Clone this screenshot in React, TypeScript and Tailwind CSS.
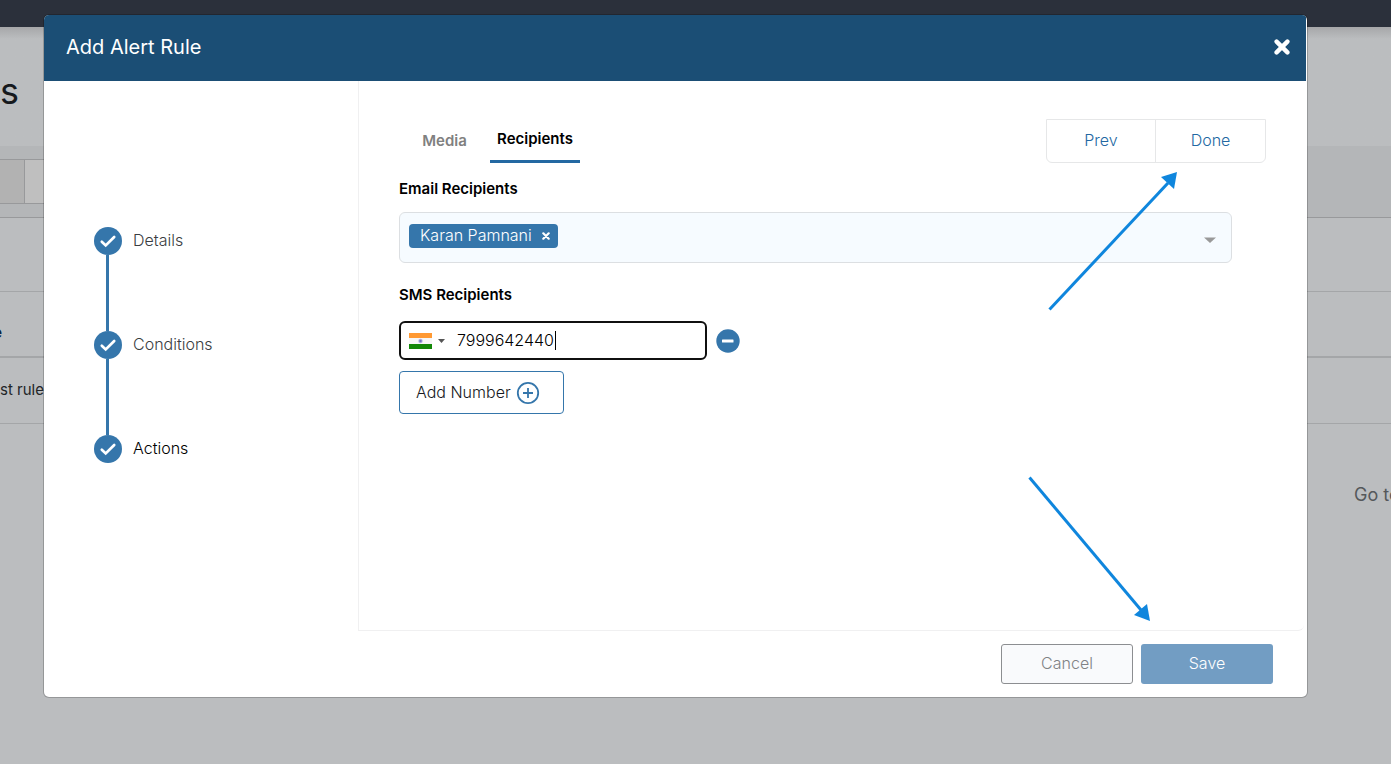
import { useState } from "react";

const steps = [
  { name: "Details", active: false },
  { name: "Conditions", active: false },
  { name: "Actions", active: true },
];

function IndiaFlag() {
  return (
    <svg width="23" height="16" viewBox="0 0 23 16" role="img" aria-label="India">
      <rect width="23" height="5" fill="#ff9933" />
      <rect y="5" width="23" height="6" fill="#f7f7f7" />
      <rect y="11" width="23" height="5" fill="#138808" />
      <circle cx="11.5" cy="8" r="2.2" fill="#b3b3e0" />
      <circle cx="11.5" cy="8" r="1.2" fill="#7373c4" />
    </svg>
  );
}

function Cross({ className }: { className: string }) {
  return (
    <svg className={className} viewBox="0 0 16 16" fill="none" stroke="currentColor" strokeWidth="4.4" strokeLinecap="round">
      <path d="M2.6 2.6l10.8 10.8M13.4 2.6L2.6 13.4" />
    </svg>
  );
}

function StepCheck() {
  return (
    <svg className="size-7" viewBox="0 0 28 28" fill="none">
      <circle cx="14" cy="14" r="14" fill="#3576ab" />
      <path d="M7.8 14.7l3.9 3.7L20.2 10" stroke="#ffffff" strokeWidth="2.7" strokeLinecap="round" />
    </svg>
  );
}

function PlusCircle() {
  return (
    <svg width="24" height="24" viewBox="0 0 24 24" fill="none" stroke="#3576ab" strokeWidth="1.8">
      <circle cx="12" cy="12" r="10.2" />
      <path d="M12 7v10M7 12h10" />
    </svg>
  );
}

function Backdrop() {
  return (
    <div className="min-h-screen bg-[#bbbdbf] overflow-hidden" aria-hidden="true">
      <div className="h-[27px] bg-[#2b303b]"></div>
      <div className="h-[119px] pt-[38px] bg-linear-to-b from-[#a6a7a9] to-[#bbbdbf] to-10% text-4xl leading-[52px] text-[#16191d]">s</div>
      <div className="h-[72px] pt-[13px] bg-[#b4b6b8] border-b border-[#98999b]">
        <div className="flex h-[45px] border-y border-[#98999b] w-12">
          <div className="w-[25px] bg-[#b2b2b2] border-r border-[#98999b]"></div>
          <div className="flex-1 bg-[#bfbfbf]"></div>
        </div>
      </div>
      <div className="h-[74px] border-b border-[#a4a6a8]"></div>
      <div className="flex h-[66px] items-center justify-start border-b-2 border-[#a4a6a8] pt-4 font-bold text-[#0c2340]">
        <span className="w-0.5 flex justify-end">e</span>
      </div>
      <div className="flex h-[66px] items-center border-b border-[#a4a6a8] text-[15px] text-[#222528]">st rule</div>
      <div className="flex justify-end pt-[57px]">
        <span className="w-[37px] text-lg whitespace-nowrap text-[#55585b]">Go to</span>
      </div>
    </div>
  );
}

function Steps() {
  return (
    <ol className="w-[314px] shrink-0 pl-[50px] pt-[146px]">
      {steps.map((step, i) => (
        <li key={step.name}>
          {i > 0 && <div className="ml-3 h-[76px] w-[3px] bg-[#3576ab]"></div>}
          <div className={step.active ? "flex items-center gap-[11px] text-black" : "flex items-center gap-[11px] text-[#3a3d41]"}>
            <StepCheck />
            <span className="pb-0.5">{step.name}</span>
          </div>
        </li>
      ))}
    </ol>
  );
}

// pointers to the Done and Save buttons
function DoneArrow() {
  return (
    <svg className="pointer-events-none absolute right-[127px] top-[90px]" width="131" height="141" viewBox="0 0 131 141" fill="#0f86dd">
      <path d="M3.5 138.5L122 12" stroke="#0f86dd" strokeWidth="3" />
      <path d="M131 1l-16 5 13 12z" />
    </svg>
  );
}

function SaveArrow() {
  return (
    <svg className="pointer-events-none absolute right-[154px] bottom-2" width="122" height="146" viewBox="0 0 122 146" fill="#0f86dd">
      <path d="M1.5 1.5L113 134" stroke="#0f86dd" strokeWidth="3" />
      <path d="M122 145l-3-17-13 11z" />
    </svg>
  );
}

export default function App() {
  const [phone, setPhone] = useState("7999642440");
  const [recipients, setRecipients] = useState(["Karan Pamnani"]);
  return (
    <div className="relative font-[Inter,sans-serif] text-base">
      <Backdrop />
      <div role="dialog" aria-labelledby="title" className="absolute top-3.5 left-[43px] right-[83px] rounded-md border border-black/20 bg-white bg-clip-padding overflow-hidden font-light">
        <header className="mr-px flex h-[66px] items-center justify-between bg-[#1b4e75] pl-[22px] pr-4 pb-0.5 text-white">
          <h1 id="title" className="text-xl font-normal">Add Alert Rule</h1>
          <button aria-label="Close"><Cross className="size-4" /></button>
        </header>
        <div className="flex min-h-[550px]">
          <Steps />
          <main className="relative mr-[3px] flex-1 rounded-br-md border-l border-b border-[#f0f0f1] pl-10 pr-[38px] pt-[38px]">
            <div className="flex h-11 justify-between">
              <div role="tablist" className="flex">
                <button role="tab" aria-selected="false" className="w-[91px] text-[15px] font-semibold text-[#808080]">Media</button>
                <button role="tab" aria-selected="true" className="w-[90px] border-b-[3px] border-[#2368a2] text-[15px] font-semibold text-black">Recipients</button>
              </div>
              <div className="flex w-[220px] rounded-b-md border border-[#e6e7e8] text-[#2368a2]">
                <button className="w-[109px] border-r border-[#e6e7e8] pb-0.5">Prev</button>
                <button className="flex-1 pb-0.5">Done</button>
              </div>
            </div>
            <label htmlFor="emails" className="mt-3.5 block text-[15px] leading-6 font-semibold text-black">Email Recipients</label>
            <div className="mt-[11px] mr-[34px] flex h-[51px] items-start gap-2 rounded-md border border-[#dcdfe2] bg-[#f6fbff] py-[11px] px-[9px]">
              {recipients.map((name) => (
                <span key={name} className="flex h-6 items-center gap-2.5 rounded bg-[#3576ab] pl-[11px] pr-2 text-white">
                  <span className="pb-0.5">{name}</span>
                  <button aria-label="Remove" onClick={() => setRecipients(recipients.filter((r) => r !== name))}>
                    <Cross className="size-2" />
                  </button>
                </span>
              ))}
              <input id="emails" className="min-w-0 flex-1 bg-transparent outline-none" />
              <button aria-label="Show options" className="self-center px-1.5 pt-1">
                <svg width="12" height="6" viewBox="0 0 12 6" fill="#999999"><path d="M0 0.5h12l-6 5.5z" /></svg>
              </button>
            </div>
            <label htmlFor="phone" className="mt-5 block text-[15px] leading-6 font-semibold text-black">SMS Recipients</label>
            <div className="mt-3.5 flex items-center gap-[9px]">
              <div className="relative flex h-[39px] w-[308px] items-center rounded-md border-2 border-[#101010] pl-2">
                <button aria-label="Country" className="flex items-center gap-1.5">
                  <IndiaFlag />
                  <svg width="7" height="4" viewBox="0 0 7 4" fill="#555555"><path d="M0 0h7l-3.5 4z" /></svg>
                </button>
                <input id="phone" value={phone} onChange={(e) => setPhone(e.target.value)} className="ml-3 min-w-0 flex-1 pb-0.5 text-black outline-none" />
                <span className="absolute left-[154px] h-[19px] w-px bg-black"></span>
              </div>
              <button aria-label="Remove number" className="size-6">
                <svg viewBox="0 0 24 24"><circle cx="12" cy="12" r="11.7" fill="#3576ab" /><rect x="6" y="10.5" width="11.5" height="3" rx="0.5" fill="#ffffff" /></svg>
              </button>
            </div>
            <button className="mt-[11px] flex h-[43px] w-[165px] items-center gap-[5px] rounded border border-[#3576ab] pl-4 text-[#16191d]">
              <span className="pb-0.5">Add Number</span> <PlusCircle />
            </button>
            <DoneArrow />
            <SaveArrow />
          </main>
        </div>
        <footer className="flex justify-end gap-2 pt-[13px] pr-[34px] pb-[13px]">
          <button className="h-10 w-[132px] rounded-[3px] border border-[#8c8e91] bg-[#f9fafc] pb-0.5 text-[#808285]">Cancel</button>
          <button className="h-10 w-[132px] rounded-[3px] bg-[#729dc3] pb-0.5 text-white">Save</button>
        </footer>
      </div>
    </div>
  );
}
